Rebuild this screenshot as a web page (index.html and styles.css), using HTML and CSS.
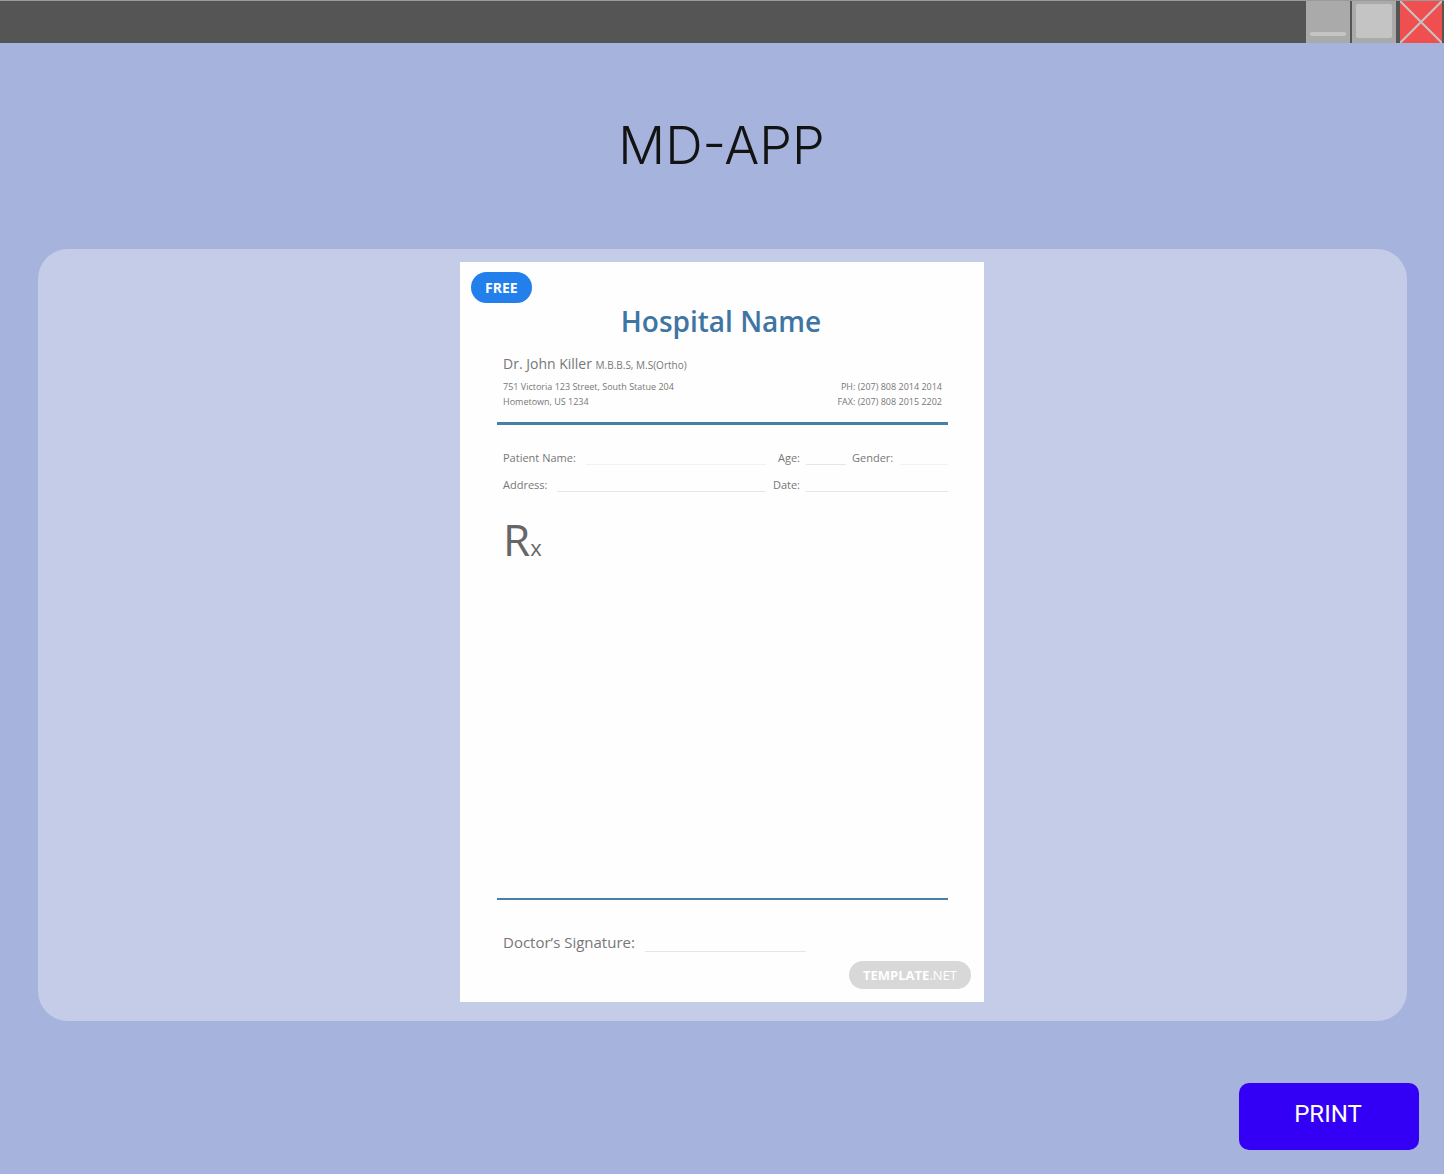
FILE: index.html
```html
<!DOCTYPE html>
<html lang="en">
<head>
<meta charset="utf-8">
<meta name="viewport" content="width=device-width, initial-scale=1">
<title>MD-APP</title>
<link rel="stylesheet" href="styles.css">
</head>
<body>
<div class="titlebar">
  <button class="win-btn" type="button" aria-label="Minimize">
    <svg width="44" height="42" viewBox="0 0 44 42"><rect x="4" y="31" width="36" height="4" rx="2" fill="#c4c4c4"/></svg>
  </button>
  <button class="win-btn" type="button" aria-label="Maximize">
    <svg width="44" height="42" viewBox="0 0 44 42"><rect x="4" y="3" width="36" height="34" rx="2" fill="#c4c4c4"/></svg>
  </button>
  <button class="win-btn win-close" type="button" aria-label="Close">
    <svg width="42" height="42" viewBox="0 0 42 42"><path d="M0 0L42 42M42 0L0 42" stroke="#c4c4c4" stroke-width="2"/></svg>
  </button>
</div>
<main class="app">
  <h1 class="app-title">MD-APP</h1>
  <section class="panel">
    <article class="paper">
      <span class="free">FREE</span>
      <h2 class="hospital">Hospital Name</h2>
      <div class="doctor">Dr. John Killer <small class="degree">M.B.B.S, M.S(Ortho)</small></div>
      <div class="contact">
        <div>751 Victoria 123 Street, South Statue 204<br>Hometown, US 1234</div>
        <div class="phones">PH: (207) 808 2014 2014<br>FAX: (207) 808 2015 2202</div>
      </div>
      <hr class="rule">
      <div class="fields">
        <div class="field"><label for="patient">Patient Name:</label><input class="faint" id="patient" type="text"></div>
        <div class="field-pair">
          <label class="end" for="age">Age:</label><input id="age" type="text">
          <label for="gender">Gender:</label><input class="faint" id="gender" type="text">
        </div>
        <div class="field"><label for="address">Address:</label><input id="address" type="text"></div>
        <div class="field-pair">
          <label class="end" for="date">Date:</label><input class="wide" id="date" type="text">
        </div>
      </div>
      <div class="rx">R<span class="rx-x">x</span></div>
      <hr class="rule rule-thin">
      <div class="signature"><label for="signature">Doctor’s Signature:</label><input id="signature" type="text"></div>
      <span class="brand"><b>TEMPLATE</b>.NET</span>
    </article>
  </section>
  <button class="print" type="button">PRINT</button>
</main>
</body>
</html>
```
FILE: styles.css
```css
* { box-sizing: border-box; }

body {
  margin: 0;
  min-height: 100vh;
  background: #a6b4dd;
  font-family: "Open Sans", sans-serif;
}

.titlebar {
  display: flex;
  justify-content: flex-end;
  gap: 2px;
  padding-right: 2px;
  border-top: 1px solid #9a9a9a;
  background: #555;
}

.win-btn {
  display: flex;
  padding: 0;
  border: 0;
  background: #aaa;
}

.win-btn svg { display: block; }

.win-close {
  margin-left: 2px;
  background: #f04f4f;
}

.app {
  display: flex;
  flex-direction: column;
  padding: 70px 25px 24px 24px;
}

.app-title {
  margin: 0 0 70px;
  color: #131313;
  font: 300 52px/66px Inter, sans-serif;
  text-align: center;
}

.panel {
  display: flex;
  justify-content: center;
  margin: 0 12px 62px 14px;
  padding: 13px 17px 19px 16px;
  border-radius: 30px;
  background: #c4cce7;
}

.paper {
  display: flex;
  flex-direction: column;
  width: 100%;
  max-width: 524px;
  min-height: 740px;
  padding: 10px 13px 13px 11px;
  background: #fefefe;
  color: #777;
}

.free {
  align-self: flex-start;
  padding: 0 14px;
  border-radius: 16px;
  background: #237feb;
  color: #fff;
  font-size: 14px;
  font-weight: 700;
  line-height: 31px;
}

.hospital {
  margin: 0;
  color: #3e75a3;
  font: 600 28px/36px "Open Sans", sans-serif;
  text-align: center;
}

.doctor {
  margin: 15px 32px 4px;
  font-size: 14px;
  line-height: 20px;
}

.degree { font-size: 10px; }

.contact {
  display: flex;
  justify-content: space-between;
  margin: 0 29px 0 32px;
  font-size: 9px;
  line-height: 15px;
}

.phones { text-align: right; }

.rule {
  width: auto;
  height: 3px;
  margin: 13px 23px 0 26px;
  border: 0;
  background: #487fa8;
}

.fields {
  display: grid;
  grid-template-columns: 1fr 176px;
  column-gap: 6px;
  margin: 19px 23px 0 32px;
  font-size: 11px;
  line-height: 27px;
}

.field,
.signature {
  display: flex;
  gap: 10px;
}

.field-pair {
  display: grid;
  grid-template-columns: 28px 40px 42px 1fr;
  column-gap: 6px;
}

.end { text-align: right; }

.wide { grid-column: 2 / -1; }

input {
  flex: 1;
  width: 100%;
  min-width: 0;
  height: 21px;
  padding: 0;
  border: 0;
  border-bottom: 1px solid #e6e6e6;
  background: none;
  color: inherit;
  font: inherit;
}

.faint { border-color: #f2f2f2; }

.rx {
  margin: 11px 32px 0;
  color: #666;
  font-size: 44px;
  line-height: 60px;
}

.rx-x { font-size: 22px; }

.rule-thin {
  height: 2px;
  margin-top: auto;
}

.signature {
  max-width: 303px;
  margin: 30px 0 7px 32px;
  font-size: 15px;
  line-height: 24px;
}

.signature input { height: 22px; }

.brand {
  align-self: flex-end;
  padding: 0 14px;
  border-radius: 14px;
  background: #d8d8d8;
  color: #fff;
  font-size: 13px;
  line-height: 28px;
}

.print {
  align-self: flex-end;
  width: 180px;
  height: 67px;
  padding: 0 2px 6px 0;
  border: 0;
  border-radius: 10px;
  background: #3300f5;
  color: #fff;
  font: 400 24px/28px Roboto, sans-serif;
}
```
